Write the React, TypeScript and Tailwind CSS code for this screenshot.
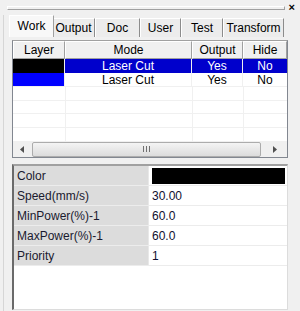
import React from "react";

const tabs = ["Work", "Output", "Doc", "User", "Test", "Transform"];
const tabW = [45, 43, 45, 41, 42, 61];

const props: [string, string][] = [
  ["Color", ""],
  ["Speed(mm/s)", "30.00"],
  ["MinPower(%)-1", "60.0"],
  ["MaxPower(%)-1", "60.0"],
  ["Priority", "1"],
];

export default function App() {
  return (
    <div
      className="w-[300px] h-[311px] bg-[#f0f0f0] overflow-hidden flex flex-col text-[12px] text-black"
      style={{ fontFamily: "Tahoma, 'Liberation Sans', Arial, sans-serif" }}
    >
      {/* title bar */}
      <div className="h-[15px] flex items-center pl-[7px] pr-[5px] shrink-0">
        <div className="flex-1 h-[4px] border-t border-l border-white border-b border-r border-b-[#a0a0a0] border-r-[#a0a0a0]" />
        <span className="ml-[4px] text-[11px] font-bold leading-none">×</span>
      </div>
      {/* body */}
      <div className="flex-1 flex flex-col border-l-[1px] border-[#d6d6d6] ml-[3px] pl-[4px]">
        {/* tabs */}
        <div className="h-[22px] flex items-end pl-[1px] shrink-0">
          {tabs.map((t, i) => (
            <div
              key={t}
              style={{ width: tabW[i] }}
              className={
                i === 0
                  ? "h-[22px] bg-[#f8f8f8] border-t border-l border-white border-r border-r-[#a0a0a0] flex items-center justify-center pb-[1px] relative z-10 -mr-[2px]"
                  : "h-[19px] bg-[#ececec] border-t border-l border-white border-r border-r-[#8c8c8c] flex items-center justify-center"
              }
            >
              <span className="leading-none">{t}</span>
            </div>
          ))}
        </div>
        {/* panel */}
        <div className="flex-1 flex flex-col pl-[4px] pr-[12px] pt-[3px]">
          {/* layer table */}
          <div className="h-[118px] border border-[#828790] border-t-[#a0a0a0] bg-white flex flex-col shrink-0">
            <div className="h-[18px] flex bg-[#f0f0f0] shrink-0">
              <HeaderCell w={52}>Layer</HeaderCell>
              <HeaderCell w={127}>Mode</HeaderCell>
              <HeaderCell w={51}>Output</HeaderCell>
              <HeaderCell w={44}>Hide</HeaderCell>
            </div>
            <div className="h-[14px] flex text-white leading-[14px]">
              <div className="w-[51px] bg-black" />
              <div className="w-[1px] bg-[#f0f0f0]" />
              <div className="w-[126px] bg-[#0000cc] text-center">Laser Cut</div>
              <div className="w-[1px] bg-[#f0f0f0]" />
              <div className="w-[50px] bg-[#0000cc] text-center">Yes</div>
              <div className="w-[1px] bg-[#f0f0f0]" />
              <div className="flex-1 bg-[#0000cc] text-center">No</div>
            </div>
            <div className="h-[14px] flex leading-[14px] border-b border-[#f0f0f0]">
              <div className="w-[51px] bg-[#0000ff]" />
              <div className="w-[127px] border-l border-[#f0f0f0] text-center">Laser Cut</div>
              <div className="w-[51px] border-l border-[#f0f0f0] text-center">Yes</div>
              <div className="flex-1 border-l border-[#f0f0f0] text-center">No</div>
            </div>
            {[0, 1, 2, 3].map((r) => (
              <div key={r} className="h-[14px] flex border-b border-[#f0f0f0] last:border-b-0">
                <div className="w-[52px]" />
                <div className="w-[127px] border-l border-[#f0f0f0]" />
                <div className="w-[51px] border-l border-[#f0f0f0]" />
                <div className="flex-1 border-l border-[#f0f0f0]" />
              </div>
            ))}
            {/* scrollbar */}
            <div className="mt-auto h-[16px] bg-[#f0f0f0] flex items-center">
              <div className="w-[19px] flex items-center justify-center">
                <svg width="5" height="7" viewBox="0 0 5 7"><path d="M4 0 L0 3.5 L4 7 Z" fill="#505050" /></svg>
              </div>
              <div className="flex-1 h-[15px] rounded-[2px] border border-[#acacac] bg-gradient-to-b from-[#f4f4f4] to-[#dcdcdc] flex items-center justify-center">
                <div className="flex gap-[2px]">
                  <div className="w-[1px] h-[6px] bg-[#707070]" />
                  <div className="w-[1px] h-[6px] bg-[#707070]" />
                  <div className="w-[1px] h-[6px] bg-[#707070]" />
                </div>
              </div>
              <div className="w-[26px] flex items-center justify-center">
                <svg width="5" height="7" viewBox="0 0 5 7"><path d="M1 0 L5 3.5 L1 7 Z" fill="#505050" /></svg>
              </div>
            </div>
          </div>
          {/* property grid */}
          <div className="mt-[6px] flex-1 bg-white border-t-2 border-l-2 border-t-[#a0a0a0] border-l-[#6a6a6a] border-r border-b border-r-[#dcdcdc] border-b-[#dcdcdc] flex flex-col mb-[1px]">
            {props.map(([k, v], i) => (
              <div key={k} className="h-[20px] flex border-b border-[#ececec] shrink-0">
                <div className="w-[135px] bg-[#dcdcdc] pl-[3px] flex items-center text-[#1a1a2e] border-r border-[#e8e8e8]">
                  {k}
                </div>
                <div className="flex-1 flex items-center pl-[3px] pr-[2px]">
                  {i === 0 ? (
                    <div className="w-full h-[16px] bg-black" />
                  ) : (
                    <span className="text-[#101030]">{v}</span>
                  )}
                </div>
              </div>
            ))}
          </div>
        </div>
      </div>
    </div>
  );
}

function HeaderCell({ w, children }: { w: number; children: React.ReactNode }) {
  return (
    <div
      style={{ width: w }}
      className="h-full bg-[#f0f0f0] border-t border-l border-white border-r border-b border-r-[#a0a0a0] border-b-[#a0a0a0] flex items-center justify-center leading-none"
    >
      {children}
    </div>
  );
}
